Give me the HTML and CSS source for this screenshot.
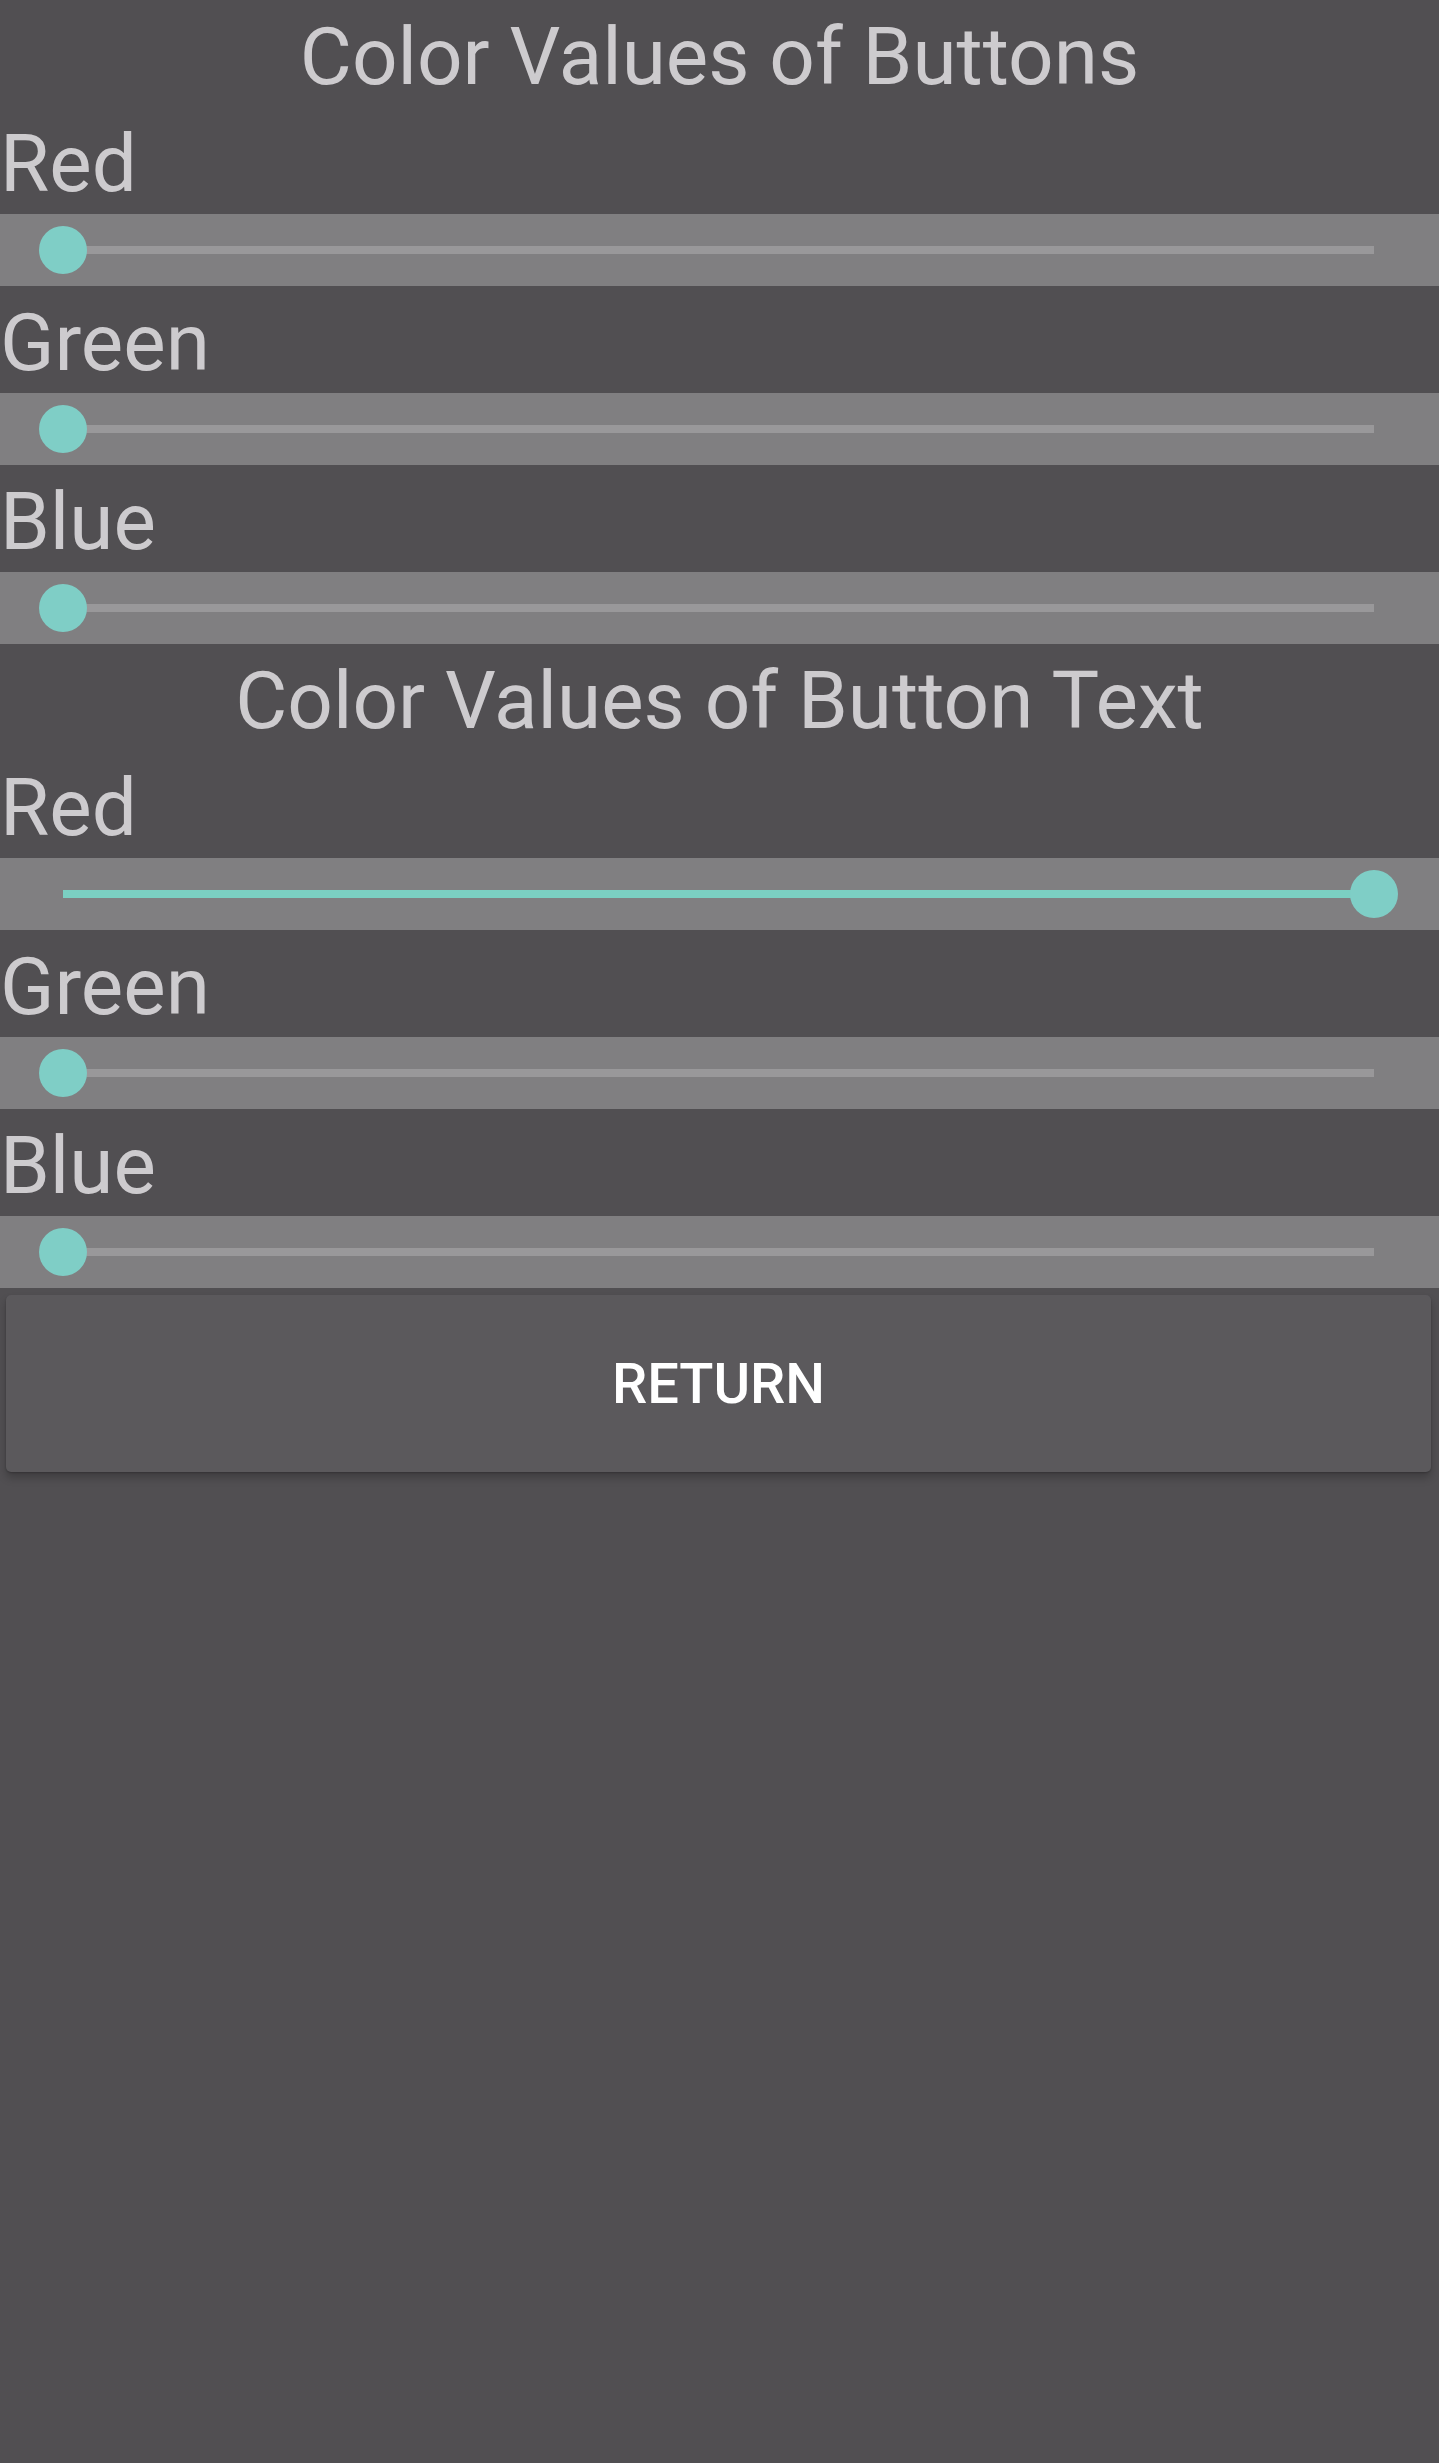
FILE: index.html
```html
<!DOCTYPE html>
<html lang="en">
<head>
<meta charset="utf-8">
<title>Color Values</title>
<link rel="stylesheet" href="styles.css">
</head>
<body>
<main class="screen">
  <section class="group">
    <h1 class="heading">Color Values of Buttons</h1>
    <div class="field">
      <div class="label">Red</div>
      <div class="band"><div class="slider"><div class="track"></div><div class="fill" style="width:0%"></div><div class="thumb" style="left:0%"></div></div></div>
    </div>
    <div class="field">
      <div class="label">Green</div>
      <div class="band"><div class="slider"><div class="track"></div><div class="fill" style="width:0%"></div><div class="thumb" style="left:0%"></div></div></div>
    </div>
    <div class="field">
      <div class="label">Blue</div>
      <div class="band"><div class="slider"><div class="track"></div><div class="fill" style="width:0%"></div><div class="thumb" style="left:0%"></div></div></div>
    </div>
  </section>
  <section class="group">
    <h1 class="heading">Color Values of Button Text</h1>
    <div class="field">
      <div class="label">Red</div>
      <div class="band"><div class="slider"><div class="track"></div><div class="fill" style="width:100%"></div><div class="thumb" style="left:100%"></div></div></div>
    </div>
    <div class="field">
      <div class="label">Green</div>
      <div class="band"><div class="slider"><div class="track"></div><div class="fill" style="width:0%"></div><div class="thumb" style="left:0%"></div></div></div>
    </div>
    <div class="field">
      <div class="label">Blue</div>
      <div class="band"><div class="slider"><div class="track"></div><div class="fill" style="width:0%"></div><div class="thumb" style="left:0%"></div></div></div>
    </div>
  </section>
  <div class="actions">
    <button class="return-btn" type="button">RETURN</button>
  </div>
</main>
</body>
</html>
```
FILE: styles.css
```css
html, body {
  margin: 0;
  padding: 0;
  background: #514f52;
}
body {
  width: 1439px;
  min-height: 2463px;
  font-family: Roboto, "Liberation Sans", sans-serif;
}
.screen {
  display: flex;
  flex-direction: column;
}
.group {
  display: flex;
  flex-direction: column;
}
.heading,
.label {
  margin: 0;
  font-size: 80px;
  font-weight: 400;
  line-height: 99px;
  padding-top: 8px;
  height: 99px;
  color: #cdcbce;
  white-space: nowrap;
}
.heading {
  text-align: center;
}
.band {
  height: 72px;
  background: #807f81;
  display: flex;
  align-items: center;
  padding: 0 65px 0 63px;
}
.slider {
  position: relative;
  flex: 1;
  height: 48px;
}
.track {
  position: absolute;
  left: 0;
  right: 0;
  top: 20px;
  height: 8px;
  background: #99989a;
}
.fill {
  position: absolute;
  left: 0;
  top: 20px;
  height: 8px;
  background: #7bcfc2;
}
.thumb {
  position: absolute;
  top: 0;
  width: 48px;
  height: 48px;
  margin-left: -24px;
  border-radius: 50%;
  background: #7fcec6;
}
.actions {
  padding: 7px 8px 0 6px;
}
.return-btn {
  display: block;
  width: 100%;
  height: 177px;
  border: 0;
  border-radius: 5px;
  background: #5b595c;
  color: #ffffff;
  font-family: Roboto, "Liberation Sans", sans-serif;
  font-weight: 500;
  font-size: 56px;
  box-shadow: 0 6px 8px rgba(0, 0, 0, 0.22), 0 1px 2px rgba(0, 0, 0, 0.2);
  padding: 0;
}
```
